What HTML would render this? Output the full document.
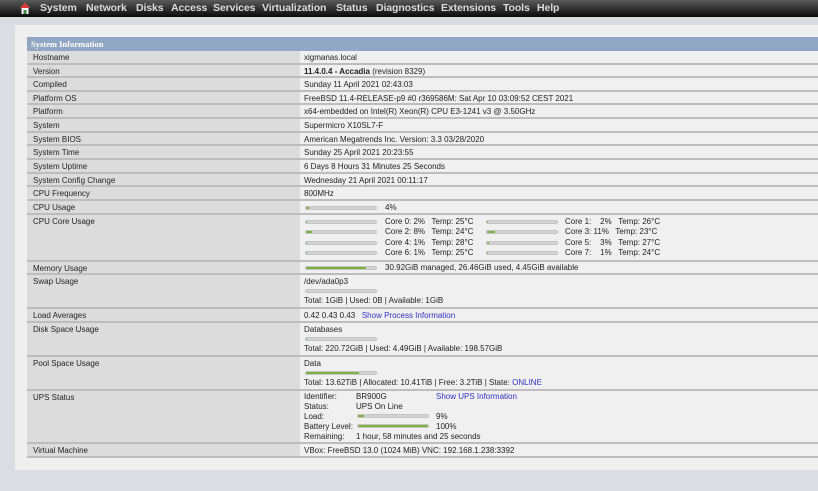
<!DOCTYPE html>
<html><head><meta charset="utf-8"><style>
*{margin:0;padding:0;box-sizing:border-box}
body{width:818px;height:491px;overflow:hidden;background:#dadde1;font-family:"Liberation Sans",sans-serif;font-size:8px;color:#222;position:relative}
.nav{position:absolute;left:0;top:0;width:818px;height:17px;background:linear-gradient(#5a5a5a,#2a2a2a 60%,#0a0a0a)}
.nav span{position:absolute;top:2px;color:#ddd;font-weight:bold;font-size:10.5px;letter-spacing:-0.1px}
.panel{position:absolute;left:15px;top:25px;width:803px;height:445px;background:#efefef}
.hdr{position:absolute;left:27px;top:37px;width:791px;height:14px;background:#90a6c2;color:#fff;font-weight:bold;font-family:"Liberation Serif",serif;font-size:8.5px;padding:2px 4px}
.row{position:absolute;left:27px;width:791px;border-bottom:2px solid #bdbdbd;background:#f0f0f0}
.row .l{position:absolute;left:0;top:0;bottom:0;width:273px;background:#dcdcdc;padding:1px 6px;line-height:11px}
.t{position:absolute;white-space:nowrap;line-height:10px}
.bar{position:absolute;width:72px;height:4px;border-radius:2px;background:#d3d3d3;border:1px solid #c4c4c4;overflow:hidden}
.bar i{display:block;height:100%;background:#7ab33e}
a{color:#3030c0;text-decoration:none}
</style></head><body>
<div class="nav">
<svg style="position:absolute;left:20px;top:3px" width="10" height="11" viewBox="0 0 10 11"><path d="M5 0L0 5h1.5v6h7V5H10z" fill="#f4f4f4"/><path d="M5 0L0 5h10z" fill="#d33"/><rect x="3.5" y="7" width="3" height="4" fill="#3a8a3a"/></svg>
<span style="left:40px">System</span><span style="left:86px">Network</span><span style="left:136px">Disks</span><span style="left:171px">Access</span><span style="left:213px">Services</span><span style="left:262px">Virtualization</span><span style="left:336px">Status</span><span style="left:376px">Diagnostics</span><span style="left:441px">Extensions</span><span style="left:503px">Tools</span><span style="left:537px">Help</span>
</div>
<div class="panel"></div>
<div class="hdr">System Information</div>

<div class="row" style="top:51px;height:14px"><div class="l">Hostname</div></div>
<div class="row" style="top:65px;height:13px"><div class="l">Version</div></div>
<div class="row" style="top:78px;height:14px"><div class="l">Compiled</div></div>
<div class="row" style="top:92px;height:13px"><div class="l">Platform OS</div></div>
<div class="row" style="top:105px;height:14px"><div class="l">Platform</div></div>
<div class="row" style="top:119px;height:14px"><div class="l">System</div></div>
<div class="row" style="top:133px;height:13px"><div class="l">System BIOS</div></div>
<div class="row" style="top:146px;height:14px"><div class="l">System Time</div></div>
<div class="row" style="top:160px;height:14px"><div class="l">System Uptime</div></div>
<div class="row" style="top:174px;height:13px"><div class="l">System Config Change</div></div>
<div class="row" style="top:187px;height:14px"><div class="l">CPU Frequency</div></div>
<div class="row" style="top:201px;height:14px"><div class="l">CPU Usage</div></div>
<div class="row" style="top:215px;height:47px"><div class="l">CPU Core Usage</div></div>
<div class="row" style="top:262px;height:13px"><div class="l">Memory Usage</div></div>
<div class="row" style="top:275px;height:34px"><div class="l">Swap Usage</div></div>
<div class="row" style="top:309px;height:14px"><div class="l">Load Averages</div></div>
<div class="row" style="top:323px;height:34px"><div class="l">Disk Space Usage</div></div>
<div class="row" style="top:357px;height:34px"><div class="l">Pool Space Usage</div></div>
<div class="row" style="top:391px;height:53px"><div class="l">UPS Status</div></div>
<div class="row" style="top:444px;height:14px"><div class="l">Virtual Machine</div></div>

<div class="t" style="left:304px;top:53px">xigmanas.local</div>
<div class="t" style="left:304px;top:67px"><b>11.4.0.4 - Accadia</b> (revision 8329)</div>
<div class="t" style="left:304px;top:80px">Sunday 11 April 2021 02:43:03</div>
<div class="t" style="left:304px;top:94px">FreeBSD 11.4-RELEASE-p9 #0 r369586M: Sat Apr 10 03:09:52 CEST 2021</div>
<div class="t" style="left:304px;top:107px">x64-embedded on Intel(R) Xeon(R) CPU E3-1241 v3 @ 3.50GHz</div>
<div class="t" style="left:304px;top:121px">Supermicro X10SL7-F</div>
<div class="t" style="left:304px;top:135px">American Megatrends Inc. Version: 3.3 03/28/2020</div>
<div class="t" style="left:304px;top:148px">Sunday 25 April 2021 20:23:55</div>
<div class="t" style="left:304px;top:162px">6 Days 8 Hours 31 Minutes 25 Seconds</div>
<div class="t" style="left:304px;top:176px">Wednesday 21 April 2021 00:11:17</div>
<div class="t" style="left:304px;top:189px">800MHz</div>
<div class="bar" style="left:305px;top:206px"><i style="width:4%"></i></div><div class="t" style="left:385px;top:203px">4%</div>

<div class="bar" style="left:305px;top:220px"><i style="width:2%"></i></div><div class="t" style="left:385px;top:217px">Core 0: 2%&nbsp;&nbsp; Temp: 25°C</div>
<div class="bar" style="left:305px;top:230px"><i style="width:8%"></i></div><div class="t" style="left:385px;top:227px">Core 2: 8%&nbsp;&nbsp; Temp: 24°C</div>
<div class="bar" style="left:305px;top:241px"><i style="width:1%"></i></div><div class="t" style="left:385px;top:238px">Core 4: 1%&nbsp;&nbsp; Temp: 28°C</div>
<div class="bar" style="left:305px;top:251px"><i style="width:1%"></i></div><div class="t" style="left:385px;top:248px">Core 6: 1%&nbsp;&nbsp; Temp: 25°C</div>
<div class="bar" style="left:486px;top:220px"><i style="width:2%"></i></div><div class="t" style="left:565px;top:217px">Core 1:&nbsp;&nbsp;&nbsp; 2%&nbsp;&nbsp; Temp: 26°C</div>
<div class="bar" style="left:486px;top:230px"><i style="width:11%"></i></div><div class="t" style="left:565px;top:227px">Core 3: 11%&nbsp;&nbsp; Temp: 23°C</div>
<div class="bar" style="left:486px;top:241px"><i style="width:3%"></i></div><div class="t" style="left:565px;top:238px">Core 5:&nbsp;&nbsp;&nbsp; 3%&nbsp;&nbsp; Temp: 27°C</div>
<div class="bar" style="left:486px;top:251px"><i style="width:1%"></i></div><div class="t" style="left:565px;top:248px">Core 7:&nbsp;&nbsp;&nbsp; 1%&nbsp;&nbsp; Temp: 24°C</div>

<div class="bar" style="left:305px;top:266px"><i style="width:85%"></i></div><div class="t" style="left:385px;top:263px">30.92GiB managed, 26.46GiB used, 4.45GiB available</div>

<div class="t" style="left:304px;top:277px">/dev/ada0p3</div>
<div class="bar" style="left:305px;top:289px"><i style="width:0%"></i></div>
<div class="t" style="left:304px;top:296px">Total: 1GiB | Used: 0B | Available: 1GiB</div>

<div class="t" style="left:304px;top:311px">0.42 0.43 0.43&nbsp;&nbsp; <a>Show Process Information</a></div>

<div class="t" style="left:304px;top:325px">Databases</div>
<div class="bar" style="left:305px;top:337px"><i style="width:2%"></i></div>
<div class="t" style="left:304px;top:344px">Total: 220.72GiB | Used: 4.49GiB | Available: 198.57GiB</div>

<div class="t" style="left:304px;top:359px">Data</div>
<div class="bar" style="left:305px;top:371px"><i style="width:76%"></i></div>
<div class="t" style="left:304px;top:378px">Total: 13.62TiB | Allocated: 10.41TiB | Free: 3.2TiB | State: <a>ONLINE</a></div>

<div class="t" style="left:304px;top:392px">Identifier:</div><div class="t" style="left:356px;top:392px">BR900G</div><div class="t" style="left:436px;top:392px"><a>Show UPS Information</a></div>
<div class="t" style="left:304px;top:402px">Status:</div><div class="t" style="left:356px;top:402px">UPS On Line</div>
<div class="t" style="left:304px;top:412px">Load:</div><div class="bar" style="left:357px;top:414px"><i style="width:9%"></i></div><div class="t" style="left:436px;top:412px">9%</div>
<div class="t" style="left:304px;top:422px">Battery Level:</div><div class="bar" style="left:357px;top:424px"><i style="width:100%"></i></div><div class="t" style="left:436px;top:422px">100%</div>
<div class="t" style="left:304px;top:432px">Remaining:</div><div class="t" style="left:356px;top:432px">1 hour, 58 minutes and 25 seconds</div>

<div class="t" style="left:304px;top:446px">VBox: FreeBSD 13.0 (1024 MiB) VNC: 192.168.1.238:3392</div>
</body></html>
